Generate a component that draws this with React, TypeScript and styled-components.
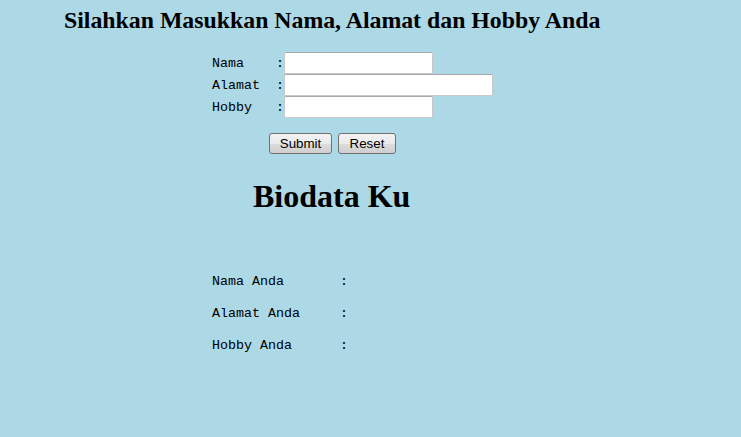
import React from "react";
import styled, { createGlobalStyle } from "styled-components";

const Global = createGlobalStyle`
  html, body { margin: 0; padding: 0; background: #add8e6; }
  body { font-family: "Liberation Serif", "Times New Roman", serif; color: #000; }
`;

const Page = styled.div`
  width: 741px;
  height: 437px;
  background: #add8e6;
  overflow: hidden;
  display: flex;
  flex-direction: column;
`;

const Title = styled.h2`
  margin: 6px 0 0 64px;
  font-size: 23.8px;
  line-height: 28px;
  font-weight: bold;
`;

const Form = styled.form`
  margin: 18px 0 0 212px;
  display: flex;
  flex-direction: column;
`;

const FieldRow = styled.div`
  display: flex;
  align-items: center;
  height: 22px;
  font-family: "Liberation Mono", "Courier New", monospace;
  font-size: 13.33px;
`;

const Label = styled.span<{ $w: number }>`
  width: ${(p) => p.$w}px;
  white-space: pre;
`;

const Colon = styled.span`
  width: 8px;
  text-align: center;
`;

const Input = styled.input<{ $w: number }>`
  box-sizing: border-box;
  width: ${(p) => p.$w}px;
  height: 22px;
  margin: 0;
  padding: 1px 3px;
  background: #fff;
  border: 1px solid #c8c8c8;
  border-top-color: #a8a8a8;
  border-radius: 2px;
  font-family: "Liberation Sans", Arial, sans-serif;
  font-size: 13px;
  outline: none;
`;

const ButtonRow = styled.div`
  display: flex;
  gap: 6px;
  margin: 15px 0 0 57px;
`;

const Button = styled.button<{ $w: number }>`
  box-sizing: border-box;
  width: ${(p) => p.$w}px;
  height: 21px;
  padding: 0;
  border: 1px solid #707070;
  border-radius: 3px;
  background: linear-gradient(#f2f2f2 0%, #ebebeb 50%, #dddddd 51%, #cfcfcf 100%);
  font-family: "Liberation Sans", Arial, sans-serif;
  font-size: 13.33px;
  color: #000;
`;

const BioTitle = styled.h1`
  margin: 24px 0 0 253px;
  font-size: 32px;
  line-height: 37px;
  font-weight: bold;
`;

const Results = styled.div`
  margin: 58px 0 0 212px;
  display: flex;
  flex-direction: column;
  gap: 16px;
`;

const ResultRow = styled.div`
  display: flex;
  height: 16px;
  align-items: center;
  font-family: "Liberation Mono", "Courier New", monospace;
  font-size: 13.33px;
`;

export default function App() {
  return (
    <Page>
      <Global />
      <Title>Silahkan Masukkan Nama, Alamat dan Hobby Anda</Title>
      <Form onSubmit={(e) => e.preventDefault()}>
        <FieldRow>
          <Label $w={64}>Nama</Label>
          <Colon>:</Colon>
          <Input $w={149} />
        </FieldRow>
        <FieldRow>
          <Label $w={64}>Alamat</Label>
          <Colon>:</Colon>
          <Input $w={209} />
        </FieldRow>
        <FieldRow>
          <Label $w={64}>Hobby</Label>
          <Colon>:</Colon>
          <Input $w={149} />
        </FieldRow>
        <ButtonRow>
          <Button $w={63} type="submit">Submit</Button>
          <Button $w={58} type="reset">Reset</Button>
        </ButtonRow>
      </Form>
      <BioTitle>Biodata Ku</BioTitle>
      <Results>
        <ResultRow>
          <Label $w={128}>Nama Anda</Label>
          <Colon>:</Colon>
        </ResultRow>
        <ResultRow>
          <Label $w={128}>Alamat Anda</Label>
          <Colon>:</Colon>
        </ResultRow>
        <ResultRow>
          <Label $w={128}>Hobby Anda</Label>
          <Colon>:</Colon>
        </ResultRow>
      </Results>
    </Page>
  );
}
